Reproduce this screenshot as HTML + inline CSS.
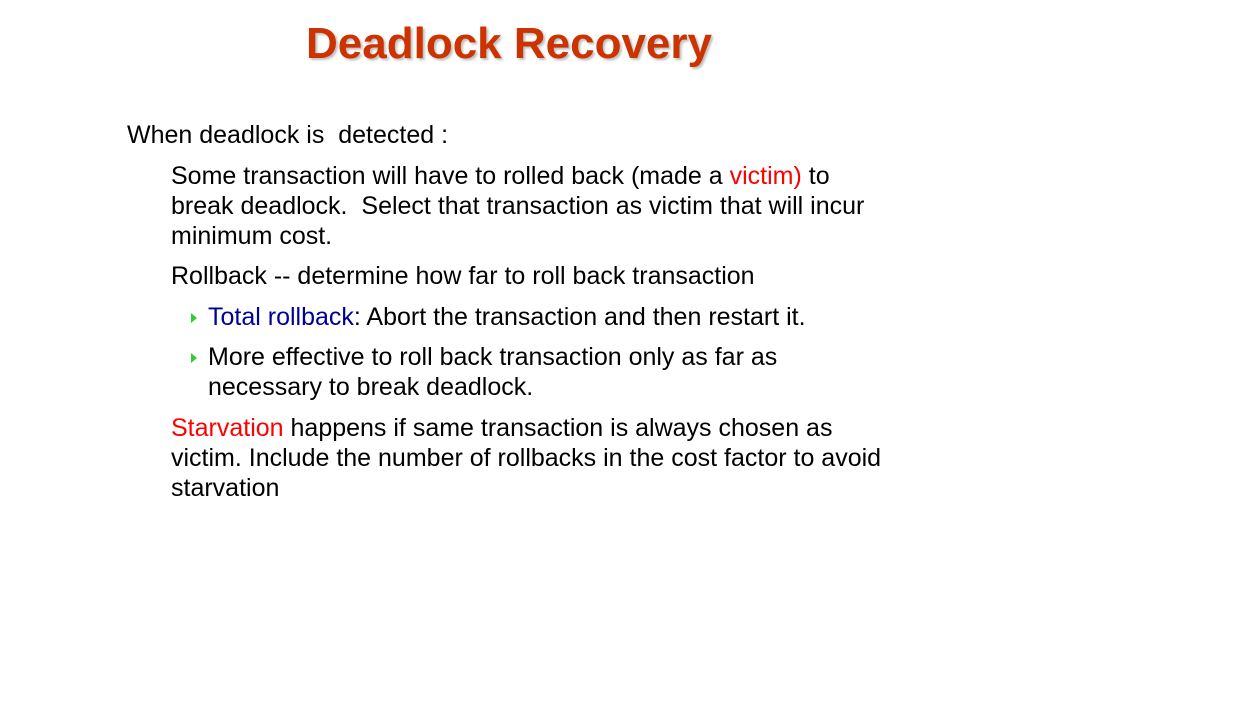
<!DOCTYPE html>
<html><head><style>
body{margin:0;width:1254px;height:706px;background:#fff;position:relative;overflow:hidden;font-family:"Liberation Sans",Arial,sans-serif;}
.t{position:absolute;left:306px;top:16px;font-size:44px;font-weight:bold;color:#cc3300;text-shadow:2px 2px 2px rgba(0,0,0,0.25);line-height:56px;white-space:nowrap}
.l{position:absolute;font-size:25px;line-height:30px;color:#000;white-space:nowrap}
.r{color:#ff0000}.b{color:#000099}
.tri{position:absolute;width:0;height:0;border-left:6px solid #33cc33;border-top:5px solid transparent;border-bottom:5px solid transparent}
</style></head><body>
<div class="t">Deadlock Recovery</div>
<div class="l" style="left:127px;top:120px">When deadlock is&nbsp; detected :</div>
<div class="l" style="left:171px;top:161px">Some transaction will have to rolled back (made a <span class="r">victim)</span> to</div>
<div class="l" style="left:171px;top:191px">break deadlock.&nbsp; Select that transaction as victim that will incur</div>
<div class="l" style="left:171px;top:221px">minimum cost.</div>
<div class="l" style="left:171px;top:261px">Rollback -- determine how far to roll back transaction</div>
<div class="tri" style="left:191px;top:313px"></div>
<div class="l" style="left:208px;top:302px"><span class="b">Total rollback</span>: Abort the transaction and then restart it.</div>
<div class="tri" style="left:191px;top:353px"></div>
<div class="l" style="left:208px;top:342px">More effective to roll back transaction only as far as</div>
<div class="l" style="left:208px;top:372px">necessary to break deadlock.</div>
<div class="l" style="left:171px;top:413px"><span class="r">Starvation</span> happens if same transaction is always chosen as</div>
<div class="l" style="left:171px;top:443px">victim. Include the number of rollbacks in the cost factor to avoid</div>
<div class="l" style="left:171px;top:473px">starvation</div>
</body></html>
